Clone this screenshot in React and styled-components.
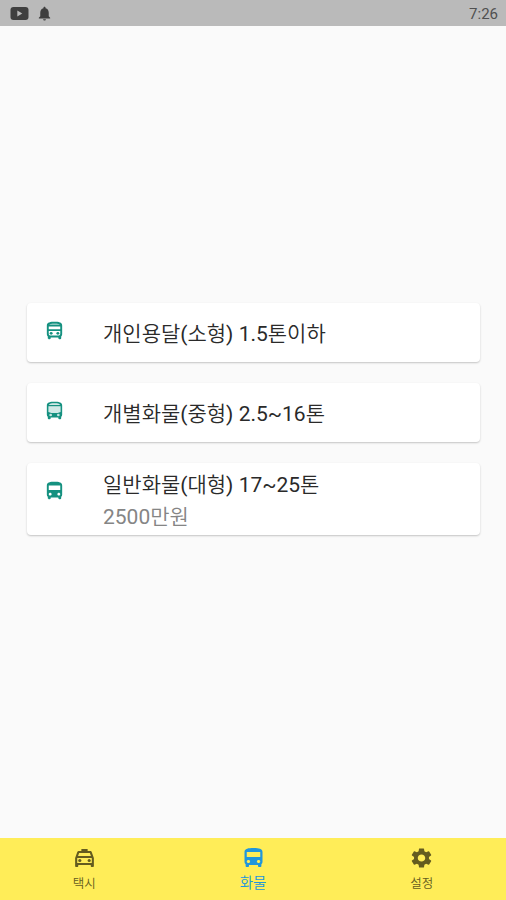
import styled, { createGlobalStyle } from "styled-components";
import {
  MdDirectionsBus,
  MdOutlineDirectionsBusFilled,
  MdOutlineLocalTaxi,
  MdSettings,
  MdNotifications,
} from "react-icons/md";

// medium truck: tinted glass with a dipped lower edge
const TintedBus = (props) => (
  <svg viewBox="0 0 24 24" fill="currentColor" {...props}>
    <path
      fillRule="evenodd"
      d="M4 6c0-3.5 3.6-4 8-4s8 .5 8 4v10c0 .9-.4 1.7-1 2.2V20a1 1 0 0 1-1 1h-1a1 1 0 0 1-1-1v-1H8v1a1 1 0 0 1-1 1H6a1 1 0 0 1-1-1v-1.8c-.6-.5-1-1.300-1-2.200zM6 5.500h12C17.500 3.900 15 3.500 12 3.500s-5.500.4-6 2zM5.700 6.800v6.200l3 1.200h6.600l3-1.200V6.800z"
    />
    <path d="M6 3.500h12v2H6zM5.700 6.800h12.600v7.600H5.700z" opacity="0.2" />
    <circle cx="8" cy="16.300" r="1.400" fill="#fff" opacity="0.75" />
    <circle cx="16" cy="16.300" r="1.400" fill="#fff" opacity="0.75" />
  </svg>
);

const TRUCKS = [
  { title: "개인용달(소형) 1.5톤이하", Icon: MdOutlineDirectionsBusFilled },
  { title: "개별화물(중형) 2.5~16톤", Icon: TintedBus },
  {
    title: "일반화물(대형) 17~25톤",
    price: "2500만원",
    Icon: MdDirectionsBus,
  },
];

const TABS = [
  { name: "택시", Icon: MdOutlineLocalTaxi },
  { name: "화물", Icon: MdDirectionsBus },
  { name: "설정", Icon: MdSettings },
];

const StatusBar = () => (
  <Status>
    <VideoIcon viewBox="0 0 18 13">
      <rect width="18" height="13" rx="3" fill="#3f3f3f" />
      <path d="M6.8 3.6v5.8l5-2.9z" fill="#bababa" />
    </VideoIcon>
    <MdNotifications size={17} color="#3f3f3f" />
    <Clock>7:26</Clock>
  </Status>
);

const App = () => {
  const activeTab = 1;

  return (
    <Screen>
      <GlobalStyle />
      <StatusBar />
      <List>
        {TRUCKS.map(({ title, price, Icon }) => (
          <Card key={title} $tall={!!price}>
            <CardIcon>
              <Icon preserveAspectRatio="none" />
            </CardIcon>
            <div>
              <Title>{title}</Title>
              {price && <Price>{price}</Price>}
            </div>
          </Card>
        ))}
      </List>
      <TabBar>
        {TABS.map(({ name, Icon }, index) => (
          <Tab key={name} $active={index === activeTab}>
            <Icon preserveAspectRatio="none" />
            <TabLabel $active={index === activeTab}>{name}</TabLabel>
          </Tab>
        ))}
      </TabBar>
    </Screen>
  );
};

const GlobalStyle = createGlobalStyle`
  * {
    box-sizing: border-box;
  }

  body {
    margin: 0;
    font-family: Roboto, "Noto Sans CJK KR DemiLight", "Noto Sans CJK KR", sans-serif;
  }
`;

const Screen = styled.div`
  display: flex;
  flex-direction: column;
  height: 900px;
  background: #fafafa;
`;

const Status = styled.header`
  display: flex;
  align-items: center;
  height: 26px;
  padding: 1px 8px 0 10px;
  gap: 7px;
  background: #bababa;
`;

const VideoIcon = styled.svg`
  width: 19px;
  height: 13px;
`;

const Clock = styled.span`
  margin-left: auto;
  font-size: 15px;
  color: #505050;
`;

const List = styled.main`
  flex: 1;
  display: flex;
  flex-direction: column;
  justify-content: center;
  gap: 21px;
  padding: 0 26px 26px 27px;
`;

const Card = styled.div`
  display: flex;
  height: ${(props) => (props.$tall ? "72px" : "59px")};
  padding-top: ${(props) => (props.$tall ? "6px" : "15px")};
  border-radius: 4px;
  background: #fff;
  box-shadow: 0 1px 2px rgba(0, 0, 0, 0.22);

  svg {
    margin-top: ${(props) => (props.$tall ? "11px" : "2px")};
  }
`;

const CardIcon = styled.div`
  width: 76px;
  padding-left: 16px;
  color: #159180;

  svg {
    display: block;
    width: 23px;
    height: 22px;
  }
`;

const Title = styled.div`
  font-size: 21px;
  line-height: 32px;
  color: #2a2a2a;
`;

const Price = styled(Title)`
  color: #858585;
`;

const TabBar = styled.nav`
  display: flex;
  height: 62px;
  background: #ffed58;
`;

const Tab = styled.button`
  flex: 1;
  display: flex;
  flex-direction: column;
  align-items: center;
  padding: 8px 0 0;
  border: 0;
  background: none;
  font-family: inherit;
  color: ${(props) => (props.$active ? "#2196dc" : "#645c1f")};

  svg {
    width: ${(props) => (props.$active ? "27px" : "25px")};
    height: 24px;
  }
`;

const TabLabel = styled.span`
  margin-top: 4px;
  font-size: ${(props) => (props.$active ? "14.5px" : "12.5px")};
  font-weight: 350;
  line-height: 20px;
`;

export default App;
